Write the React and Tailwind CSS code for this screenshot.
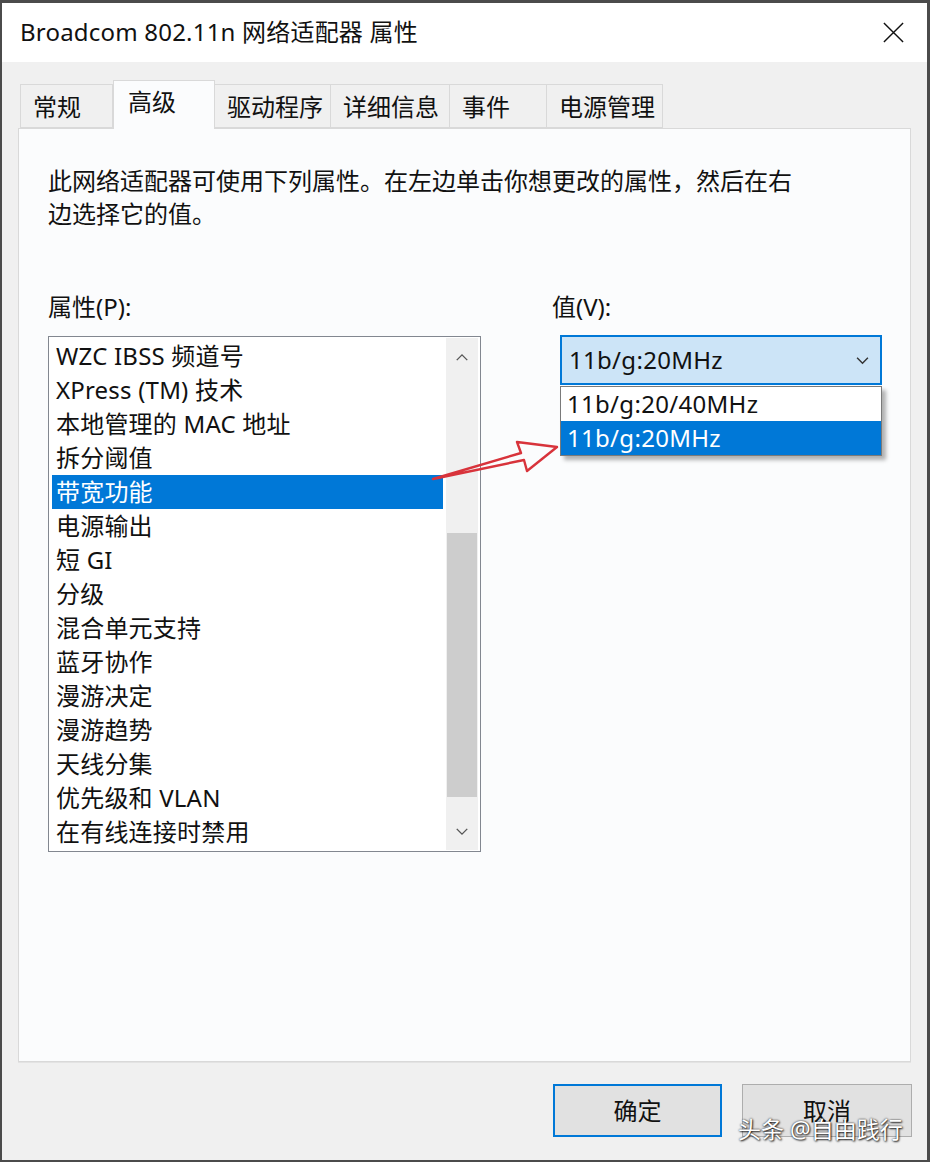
import React from 'react';

const TABS = [
  { id: 'general', label: '常规', w: 'w-[93px]' },
  { id: 'advanced', label: '高级', w: 'w-[102px]', active: true },
  { id: 'driver', label: '驱动程序', w: 'w-[116px]' },
  { id: 'details', label: '详细信息', w: 'w-[119px]' },
  { id: 'events', label: '事件', w: 'w-[97px]' },
  { id: 'power', label: '电源管理', w: 'w-[116px]' },
];

const PROPS = [
  'WZC IBSS 频道号',
  'XPress (TM) 技术',
  '本地管理的 MAC 地址',
  '拆分阈值',
  '带宽功能',
  '电源输出',
  '短 GI',
  '分级',
  '混合单元支持',
  '蓝牙协作',
  '漫游决定',
  '漫游趋势',
  '天线分集',
  '优先级和 VLAN',
  '在有线连接时禁用',
];

const VALUES = ['11b/g:20/40MHz', '11b/g:20MHz'];

// 小箭头（滚动条 / 下拉框）
const Chevron = ({ up, className }) => (
  <svg viewBox="0 0 16 10" className={className} fill="none" stroke="currentColor" strokeWidth="1.6">
    {up ? <path d="M2 8 L8 2 L14 8" /> : <path d="M2 2 L8 8 L14 2" />}
  </svg>
);

export default function App() {
  const selected = '带宽功能';
  const value = '11b/g:20MHz';

  return (
    <div className="relative w-[930px] h-[1162px] bg-[#4b4b4b] pl-[2px] pr-[3px] pt-[3px] pb-[2px] font-['Noto_Sans','Noto_Sans_CJK_SC',sans-serif] text-[24px] text-[#111]">
      <div className="flex flex-col h-full bg-[#f0f0f0]">

        {/* 标题栏 */}
        <div className="flex items-center justify-between h-[59px] bg-white pl-[18px] pr-[18px]">
          <span className="text-[24px] leading-none -mt-[1px] tracking-[0.2px]">Broadcom 802.11n 网络适配器 属性</span>
          <svg viewBox="0 0 24 24" className="w-[23px] h-[23px] mr-[4px]" fill="none" stroke="#111" strokeWidth="1.5">
            <path d="M2 2 L22 22 M22 2 L2 22" />
          </svg>
        </div>

        {/* 选项卡 */}
        <div className="flex items-end h-[66px] pl-[18px]">
          {TABS.map(t => (
            <div
              key={t.id}
              className={`${t.w} relative flex border border-[#d9d9d9] ${
                t.active
                  ? 'h-[49px] -mb-[1px] bg-[#fbfcfd] border-b-0 z-10 pl-[14px] pt-[6px]'
                  : 'h-[44px] bg-[#f0f0f0] border-l-0 first:border-l pl-[12px] pt-[7px]'
              }`}
            >
              <span className="leading-[30px]">{t.label}</span>
            </div>
          ))}
        </div>

        {/* 面板 */}
        <div className="mx-[16px] h-[934px] bg-[#fbfcfd] border border-[#d9d9d9] pl-[29px] pt-[35px] shadow-[0_1px_0_#e3e3e3]">
          <p className="leading-[33px]">
            此网络适配器可使用下列属性。在左边单击你想更改的属性，然后在右<br />
            边选择它的值。
          </p>

          <div className="flex mt-[60px]">
            {/* 属性列表 */}
            <div className="w-[433px]">
              <div className="leading-[33px]">属性(P):</div>
              <div className="mt-[13px] w-[433px] h-[516px] border border-[#828790] bg-white flex">
                <div className="flex-1 pl-[3px] pr-[3px] pt-[2px]">
                  {PROPS.map(p => (
                    <div
                      key={p}
                      className={`h-[34px] leading-[34px] pl-[4px] whitespace-nowrap tracking-[0.2px] ${
                        p === selected ? 'bg-[#0078d7] text-white' : ''
                      }`}
                    >
                      {p}
                    </div>
                  ))}
                </div>
                <div className="w-[32px] my-[1px] mr-[2px] bg-[#f0f0f0] flex flex-col">
                  <div className="h-[38px] flex items-center justify-center text-[#555]">
                    <Chevron up className="w-[14px] h-[9px]" />
                  </div>
                  <div className="flex-1 pt-[157px]">
                    <div className="h-[264px] mx-[1px] bg-[#cdcdcd]" />
                  </div>
                  <div className="h-[38px] flex items-center justify-center text-[#555]">
                    <Chevron className="w-[14px] h-[9px]" />
                  </div>
                </div>
              </div>
            </div>

            {/* 值 */}
            <div className="ml-[71px]">
              <div className="leading-[33px]">值(V):</div>
              <div className="mt-[12px] ml-[8px] w-[322px]">
                <div className="h-[50px] flex items-center justify-between bg-[#cce4f7] border-2 border-[#0078d7] pl-[7px] pr-[10px]">
                  <span className="tracking-[0.3px]">{value}</span>
                  <Chevron className="w-[15px] h-[9px] text-[#333]" />
                </div>
                <div className="mt-[1px] border border-[#7a7a7a] bg-white shadow-[4px_4px_4px_rgba(0,0,0,0.3)]">
                  {VALUES.map(v => (
                    <div
                      key={v}
                      className={`h-[34px] leading-[34px] pl-[6px] tracking-[0.3px] ${
                        v === value ? 'bg-[#0078d7] text-white' : ''
                      }`}
                    >
                      {v}
                    </div>
                  ))}
                </div>
              </div>
            </div>
          </div>
        </div>

        {/* 按钮 */}
        <div className="flex justify-end gap-[20px] pr-[15px] mt-[22px]">
          <button className="w-[169px] h-[53px] bg-[#e1e1e1] border-2 border-[#0078d7]">确定</button>
          <button className="w-[170px] h-[53px] bg-[#e1e1e1] border border-[#adadad]">取消</button>
        </div>
      </div>

      {/* 红色箭头标注 */}
      <svg className="absolute left-0 top-0 pointer-events-none" width="930" height="1162">
        <polygon
          points="433,479 521,453 517,442 557,447 527,471 524,460"
          fill="none"
          stroke="#d8333b"
          strokeWidth="2.4"
          strokeLinejoin="round"
        />
      </svg>

      {/* 水印 */}
      <div className="absolute left-[738px] top-[1112px] text-[23px] text-white [text-shadow:0_0_2px_rgba(0,0,0,0.9),1px_1px_2px_rgba(0,0,0,0.8)] whitespace-nowrap">
        头条 @自由践行
      </div>
    </div>
  );
}
